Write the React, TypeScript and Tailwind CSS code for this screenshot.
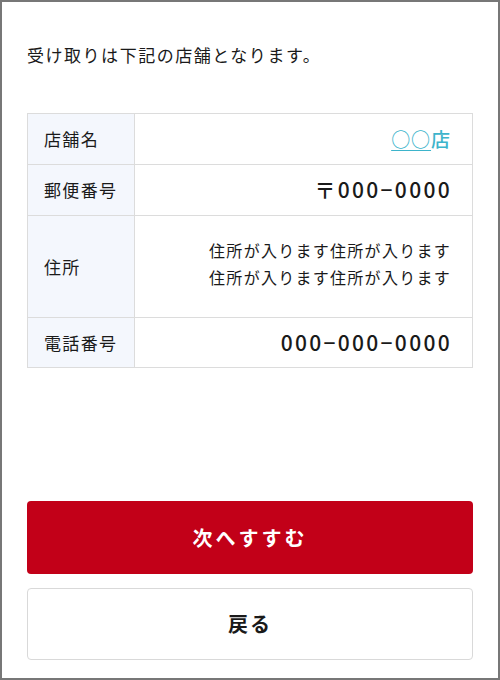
import React from "react";

const font = { fontFamily: '"Noto Sans CJK JP", "Noto Sans", sans-serif' };

export default function App() {
  return (
    <div
      className="w-[500px] h-[680px] border-2 border-[#777777] bg-white flex flex-col text-[#1a1a1a]"
      style={font}
    >
      <div className="px-[25px] pt-[41px] flex flex-col flex-1">
        <p className="text-[17px] leading-[24px] tracking-[0.09em]">
          受け取りは下記の店舗となります。
        </p>
        <table className="mt-[46px] w-full border-collapse border border-[#dcdcdc]">
          <tbody>
            <tr className="h-[51px]">
              <th className="w-[107px] bg-[#f4f7fd] border border-[#dcdcdc] text-left font-normal pl-[16px] text-[17px] tracking-[0.08em]">
                店舗名
              </th>
              <td className="border border-[#dcdcdc] text-right pr-[21px] text-[19px] font-medium tracking-[0.05em] text-[#3db4cb]">
                <span className="underline underline-offset-[3px] decoration-1">○○</span>店
              </td>
            </tr>
            <tr className="h-[51px]">
              <th className="bg-[#f4f7fd] border border-[#dcdcdc] text-left font-normal pl-[16px] text-[17px] tracking-[0.08em]">
                郵便番号
              </th>
              <td className="border border-[#dcdcdc] text-right pr-[20px] text-[21px] font-medium tracking-[0.11em]">
                〒000−0000
              </td>
            </tr>
            <tr className="h-[102px]">
              <th className="bg-[#f4f7fd] border border-[#dcdcdc] text-left font-normal pl-[16px] text-[17px] tracking-[0.08em]">
                住所
              </th>
              <td className="border border-[#dcdcdc] text-right pr-[21px] text-[16px] leading-[27px] tracking-[0.08em] align-top pt-[21px]">
                住所が入ります住所が入ります
                <br />
                住所が入ります住所が入ります
              </td>
            </tr>
            <tr className="h-[50px]">
              <th className="bg-[#f4f7fd] border border-[#dcdcdc] text-left font-normal pl-[16px] text-[17px] tracking-[0.08em]">
                電話番号
              </th>
              <td className="border border-[#dcdcdc] text-right pr-[20px] text-[21px] font-medium tracking-[0.11em]">
                000−000−0000
              </td>
            </tr>
          </tbody>
        </table>
        <div className="flex-1" />
        <div className="flex flex-col gap-[14px] pb-[18px]">
          <button className="h-[73px] w-full rounded-[4px] bg-[#c20018] text-white text-[20px] font-bold tracking-[0.15em]">
            次へすすむ
          </button>
          <button className="h-[72px] w-full rounded-[4px] border border-[#d9d9d9] bg-white text-[#1a1a1a] text-[20px] font-bold tracking-[0.1em]">
            戻る
          </button>
        </div>
      </div>
    </div>
  );
}
